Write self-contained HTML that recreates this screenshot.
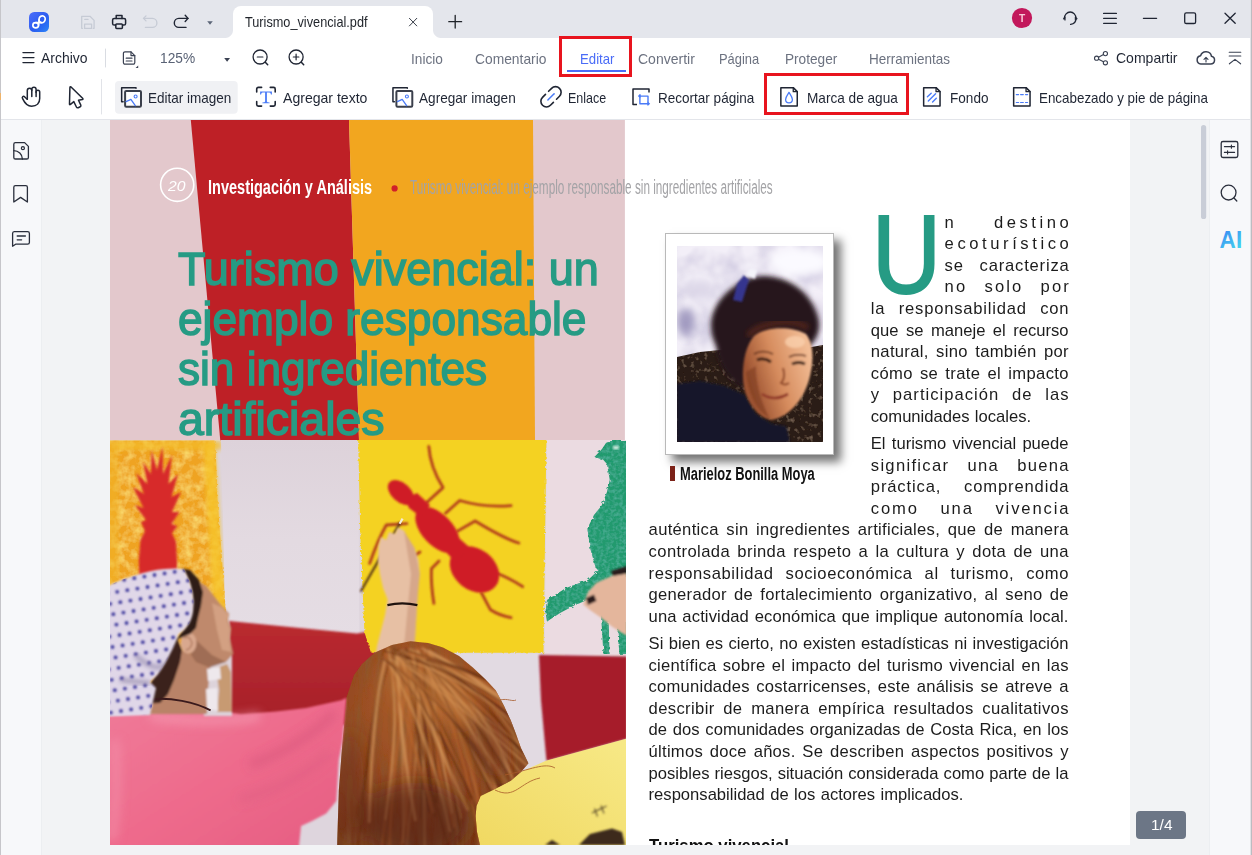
<!DOCTYPE html>
<html lang="es">
<head>
<meta charset="utf-8">
<title>Turismo_vivencial.pdf</title>
<style>
*{box-sizing:border-box;margin:0;padding:0}
html,body{width:1252px;height:855px;overflow:hidden;background:#f2f3f5;font-family:"Liberation Sans",sans-serif;}
#app{position:absolute;left:0;top:0;width:1252px;height:855px;overflow:hidden;background:#f2f3f5}
.abs{position:absolute}
.t{position:absolute;white-space:nowrap;line-height:1;transform-origin:0 0}
svg{position:absolute;overflow:visible}
/* title bar */
#titlebar{position:absolute;left:0;top:0;width:1252px;height:38px;background:#e4e6ec}
#tab{position:absolute;left:233px;top:6px;width:200px;height:32px;background:#fff;border-radius:8px 8px 0 0}
#tab:before,#tab:after{content:"";position:absolute;bottom:0;width:8px;height:8px}
#tab:before{left:-8px;background:radial-gradient(circle at 0 0,rgba(255,255,255,0) 7.5px,#fff 8.5px)}
#tab:after{right:-8px;background:radial-gradient(circle at 100% 0,rgba(255,255,255,0) 7.5px,#fff 8.5px)}
#toolbar{position:absolute;left:1px;top:38px;width:1249px;height:82px;background:#fff;border-bottom:1px solid #e3e5ea}
.ui{font-size:13.5px;color:#1f2533}
.nav{font-size:13.5px;color:#6c7280}
.redbox{position:absolute;border:3px solid #e8141e}
/* side bars */
#lside{position:absolute;left:1px;top:120px;width:41px;height:735px;background:#f7f8fa;border-right:1px solid #eceef1}
#rside{position:absolute;left:1209px;top:120px;width:41px;height:735px;background:#f7f8fa;border-left:1px solid #eceef1}
#edgeL{position:absolute;left:0;top:0;width:1px;height:855px;background:#c6c6ca}
#edgeR{position:absolute;left:1250px;top:0;width:2px;height:855px;background:linear-gradient(to right,#e2e2e6 50%,#bcbcc1 50%)}
/* page */
#page{position:absolute;left:110px;top:120px;width:1020px;height:725px;background:#fff;overflow:hidden}
.body{position:absolute;font-size:16.6px;color:#1a1a1a;white-space:nowrap;line-height:1;text-align:justify;text-align-last:justify}
</style>
</head>
<body>
<div id="app">

<!-- ============ TITLE BAR ============ -->
<div id="titlebar">
  <div id="tab"></div>
</div>

<!-- ============ TOOLBAR ============ -->
<div id="toolbar"></div>
<svg class="abs" style="left:0;top:0" width="1252" height="120" viewBox="0 0 1252 120" fill="none" stroke-linecap="round" stroke-linejoin="round" ><defs><linearGradient id="lg" x1="0" y1="0" x2="1" y2="1"><stop offset="0" stop-color="#4d6dfa"/><stop offset=".55" stop-color="#2a5cf0"/><stop offset="1" stop-color="#2b86f8"/></linearGradient></defs>
<rect x="29" y="12" width="20" height="20" rx="5.2" fill="url(#lg)"/>
<g stroke="#fff" stroke-width="1.7"><ellipse cx="42.1" cy="19.3" rx="3.05" ry="3.45" transform="rotate(18 42.1 19.3)"/><ellipse cx="35.7" cy="25.3" rx="2.85" ry="2.6"/><path d="M36,22.7 H41.4 M39.1,19.9 L38.5,25.1"/></g><g stroke="#c6cbd5" stroke-width="1.3"><path d="M82.5,28.3 H81.7 V16.3 H90 L94.1,20.4 V28.3 H93.3"/><rect x="84.6" y="24.2" width="7" height="4.2"/><path d="M84.8,19.4 H88"/></g><g stroke="#1f2533" stroke-width="1.5"><path d="M116.2,18.4 V15.6 H122 V18.4"/><path d="M115.6,25 H114.2 a1.6,1.6 0 0 1 -1.6,-1.6 V20 a1.6,1.6 0 0 1 1.6,-1.6 H124 a1.6,1.6 0 0 1 1.6,1.6 V23.4 a1.6,1.6 0 0 1 -1.6,1.6 H122.6"/><rect x="115.8" y="23.9" width="6.6" height="4.5" rx=".8"/></g><g stroke="#c6cbd5" stroke-width="1.3"><path d="M146,15.9 L143.5,18.4 L146,20.9"/><path d="M143.5,18.4 H152.4 a4.5,4.5 0 0 1 0,9 H145.4"/></g><g stroke="#1f2533" stroke-width="1.4"><path d="M185.2,15.3 L188,18.4 L185.2,21.5"/><path d="M188,18.4 H178.8 a4.5,4.5 0 0 0 0,9 H186"/></g><path d="M207.2,21.2 H212.8 L210,24.7 Z" fill="#5b6577" stroke="none"/><path d="M409.4,18.3 L416.8,25.9 M416.8,18.3 L409.4,25.9" stroke="#3a3f4a" stroke-width="1"/><path d="M448.8,21.7 H461.6 M455.2,15.3 V28.1" stroke="#1f2329" stroke-width="1.3"/><circle cx="1022" cy="18" r="10.1" fill="#c2185b" stroke="none"/><g stroke="#1f2533" stroke-width="1.3"><path d="M1064.4,18.4 a5.8,6.4 0 0 1 11.6,0 C1076,21.8 1073.6,23.8 1070.6,24.3"/></g><path d="M1063.3,18.4 L1065.2,16.8 V20 Z M1077.1,18.4 L1075.2,16.8 V20 Z" fill="#1f2533" stroke="#1f2533" stroke-width=".7"/><g stroke="#1f2533" stroke-width="1.3"><path d="M1103.6,13.4 H1116.4 M1103.6,18.3 H1116.4 M1103.6,23.3 H1116.4"/><path d="M1143.4,18.3 H1156.6"/><rect x="1184.7" y="12.9" width="10.9" height="10.6" rx="1.6"/><path d="M1225,13.2 L1235.2,23.2 M1235.2,13.2 L1225,23.2"/></g></svg><div class="t" style="left:245.4px;top:15px;font-size:14.2px;color:#1f2329;transform:scaleX(0.8962);">Turismo_vivencial.pdf</div><div class="t" style="left:1019.0px;top:13px;font-size:11.2px;font-weight:700;color:#f8c9d8;transform:scaleX(0.9062);">T</div><svg class="abs" style="left:0;top:0" width="1252" height="120" viewBox="0 0 1252 120" fill="none" stroke-linecap="round" stroke-linejoin="round" ><g stroke="#1f2533" stroke-width="1.2"><path d="M22.9,52.6 H34 M22.9,57.6 H34 M22.9,62.6 H34"/></g><path d="M105.5,49 V67" stroke="#d9dce2" stroke-width="1"/><g stroke="#3a4152" stroke-width="1.2"><path d="M125,51.8 H131 L134.8,55.6 V62.6 a1.6,1.6 0 0 1 -1.6,1.6 H125 a1.6,1.6 0 0 1 -1.6,-1.6 V53.4 a1.6,1.6 0 0 1 1.6,-1.6 Z"/><path d="M131,51.8 V55.6 H134.8"/><path d="M126.2,58.2 H132 M126.2,61 H132"/></g><path d="M138.2,65.4 V68 H135.6 Z" fill="#3a4152" stroke="none"/><path d="M224.2,57.9 H230 L227.1,61.8 Z" fill="#3a4152" stroke="none"/><g stroke="#1f2533" stroke-width="1.3"><circle cx="260.1" cy="57" r="7"/><path d="M257.3,57 H262.90000000000003" stroke-width="1.2"/><path d="M265.3,62.3 L267.70000000000005,64.8" stroke-width="1.5"/></g><g stroke="#1f2533" stroke-width="1.3"><circle cx="296.1" cy="57" r="7"/><path d="M293.3,57 H298.90000000000003 M296.1,54.2 V59.8" stroke-width="1.2"/><path d="M301.3,62.3 L303.70000000000005,64.8" stroke-width="1.5"/></g><rect x="567" y="70" width="59" height="2" fill="#4a6cf7" stroke="none"/><g stroke="#3a4152" stroke-width="1.1"><circle cx="1105.4" cy="53.6" r="2.1"/><circle cx="1096.6" cy="58.2" r="2.1"/><circle cx="1105.4" cy="62.8" r="2.1"/><path d="M1098.5,57.2 L1103.5,54.6 M1098.5,59.2 L1103.5,61.8"/></g><g stroke="#3a4152" stroke-width="1.5"><path d="M1201.8,64 H1210.6 a3.9,3.9 0 0 0 .9,-7.7 a5.6,5.6 0 0 0 -10.9,-.6 a4.2,4.2 0 0 0 .2,8.3 Z"/><path d="M1206,62 V57.6 M1204,59.4 L1206,57.4 L1208,59.4" stroke-width="1.1"/></g><g stroke="#3a4152" stroke-width="1.1"><path d="M1229.2,52.3 H1240.8 M1229.2,56 H1240.8 M1229.4,63.8 L1235,59.4 L1240.6,63.8"/></g></svg><div class="t" style="left:41.1px;top:51px;font-size:14.2px;color:#1f2533;transform:scaleX(0.9842);">Archivo</div><div class="t" style="left:159.5px;top:51px;font-size:14.2px;color:#596275;transform:scaleX(0.9665);">125%</div><div class="t" style="left:410.6px;top:52px;font-size:14.2px;color:#6c7280;transform:scaleX(0.9623);">Inicio</div><div class="t" style="left:475.2px;top:52px;font-size:14.2px;color:#6c7280;transform:scaleX(0.9741);">Comentario</div><div class="t" style="left:579.6px;top:52px;font-size:14.2px;color:#4a6cf7;transform:scaleX(0.9300);">Editar</div><div class="t" style="left:638.2px;top:52px;font-size:14.2px;color:#6c7280;transform:scaleX(0.9878);">Convertir</div><div class="t" style="left:719.4px;top:52px;font-size:14.2px;color:#6c7280;transform:scaleX(0.9092);">Página</div><div class="t" style="left:784.5px;top:52px;font-size:14.2px;color:#6c7280;transform:scaleX(0.9603);">Proteger</div><div class="t" style="left:869.4px;top:52px;font-size:14.2px;color:#6c7280;transform:scaleX(0.9516);">Herramientas</div><div class="t" style="left:1116.0px;top:51px;font-size:14.2px;color:#1f2533;transform:scaleX(0.9882);">Compartir</div><div class="redbox" style="left:559px;top:36px;width:73px;height:41px"></div><svg class="abs" style="left:0;top:0" width="1252" height="120" viewBox="0 0 1252 120" fill="none" stroke-linecap="round" stroke-linejoin="round" ><g stroke="#1f2533" stroke-width="1.5"><path d="M27.2,99.2 L24.5,96.7 a1.35,1.35 0 0 0 -1.9,1.9 C24.2,102 26.4,106.2 31.6,106.2 C37,106.2 39.7,102.8 39.7,98.6 V92 a1.8,1.8 0 0 0 -3.6,0 V96.6"/><path d="M36.1,92.4 V89.4 a2.1,2.1 0 0 0 -4.3,0 V96.6"/><path d="M31.8,90.6 a2.2,2.2 0 0 0 -4.5,0 V99.2"/></g><path d="M69.9,87.7 L69.5,103.9 Q69.5,105.2 70.5,104.4 L73.8,101.6 L76.4,107 Q77,108.2 78.2,107.7 L80.2,106.8 Q81.3,106.2 80.8,105.1 L78.5,100.3 L82.3,99.5 Q83.5,99.1 82.6,98.2 L71.3,87.2 Q70,86.2 69.9,87.7 Z" stroke="#1f2533" stroke-width="1.5"/><path d="M101.5,79.5 V114" stroke="#e1e3e8" stroke-width="1"/><rect x="115" y="81" width="122.7" height="32.7" rx="4" fill="#f0f1f4" stroke="none"/><path d="M136.0,88.3 V87.65 H121.65 V101.7 H123.10000000000001" stroke="#1f2533" stroke-width="1.5"/><rect x="125.10000000000001" y="90.9" width="15.9" height="15.9" rx="1.2" stroke="#3a3f4b" stroke-width="2" fill="#fff"/><path d="M126.10000000000001,101.6 L130.9,99.3 L135.3,105.6" stroke="#4a7bf7" stroke-width="1.3"/><circle cx="135.6" cy="96.5" r="1.5" stroke="#4a7bf7" stroke-width="1.1"/><g stroke="#1f2533" stroke-width="1.6"><path d="M256.7,92 V89 a1.6,1.6 0 0 1 1.6,-1.6 H261.6 M270.3,87.4 H273.6 a1.6,1.6 0 0 1 1.6,1.6 V92 M275.2,101.6 V104.5 a1.6,1.6 0 0 1 -1.6,1.6 H270.3 M261.6,106.1 H258.3 a1.6,1.6 0 0 1 -1.6,-1.6 V101.6"/></g><path d="M260.1,94.4 V91.4 H271.9 V94.4 H270.9 Q270.8,92.6 269.3,92.6 H266.9 V101.4 Q266.9,102.3 269.6,102.4 V103.2 H262.4 V102.4 Q265.1,102.3 265.1,101.4 V92.6 H262.7 Q261.2,92.6 261.1,94.4 Z" fill="#4a7bf7" stroke="none"/><path d="M407.3,88.3 V87.65 H392.95 V101.7 H394.4" stroke="#1f2533" stroke-width="1.5"/><rect x="396.4" y="90.9" width="15.9" height="15.9" rx="1.2" stroke="#3a3f4b" stroke-width="2" fill="#fff"/><path d="M397.4,101.6 L402.2,99.3 L406.59999999999997,105.6" stroke="#4a7bf7" stroke-width="1.3"/><circle cx="406.9" cy="96.5" r="1.5" stroke="#4a7bf7" stroke-width="1.1"/><g transform="translate(551 96.8) rotate(-45)"><path d="M2.2,-5.6 H6.4 a5.6,5.6 0 0 1 0,11.2 H2.2 M-2.2,-5.6 H-6.4 a5.6,5.6 0 0 0 0,11.2 H-2.2" stroke="#1f2533" stroke-width="1.6"/><path d="M-4.4,0 H4.4" stroke="#4a7bf7" stroke-width="1.5"/></g><path d="M649,92.6 V89 H633 V104.6 H637" stroke="#1f2533" stroke-width="1.5" stroke-linecap="butt"/><g stroke="#4a7bf7" stroke-width="1.4"><path d="M639.9,95 V103.7 H648.4 M639.4,96.1 H648 V104.6"/></g><path d="M637.8,96.1 L640.4,93.9 V98.3 Z M650.2,103.7 L647.6,101.5 V105.9 Z" fill="#4a7bf7" stroke="none"/><path d="M780.85,87.65 H793.25 L797.25,91.65 V105.95 H780.85 Z" stroke="#1f2533" stroke-width="1.5"/><path d="M793.25,87.65 V91.65 H797.25" stroke="#1f2533" stroke-width="1.3"/><path d="M789,92.4 C787.4,95 785.6,97 785.6,99.4 a3.4,3.4 0 0 0 6.8,0 C792.4,97 790.6,95 789,92.4 Z" stroke="#4a7bf7" stroke-width="1.3"/><path d="M923.65,87.65 H936.05 L940.05,91.65 V105.95 H923.65 Z" stroke="#1f2533" stroke-width="1.5"/><path d="M936.05,87.65 V91.65 H940.05" stroke="#1f2533" stroke-width="1.3"/><g stroke="#4a7bf7" stroke-width="1.4"><path d="M927.4,96.8 L931.2,93.2 M928.3,101 L935.6,93.8 M932.6,101.9 L936.3,98.3"/></g><path d="M1013.65,87.65 H1026.05 L1030.05,91.65 V105.95 H1013.65 Z" stroke="#1f2533" stroke-width="1.5"/><path d="M1026.05,87.65 V91.65 H1030.05" stroke="#1f2533" stroke-width="1.3"/><g stroke="#4a7bf7" stroke-width="1.2"><path d="M1016.3,94.6 H1018.6 M1020.6,94.6 H1023.3 M1025.5,94.6 H1027.6 M1016.3,102.5 H1018.6 M1020.6,102.5 H1023.3 M1025.5,102.5 H1027.6"/></g></svg><div class="t" style="left:148.0px;top:91px;font-size:14.2px;color:#1f2533;transform:scaleX(0.9519);">Editar imagen</div><div class="t" style="left:283.3px;top:91px;font-size:14.2px;color:#1f2533;transform:scaleX(0.9912);">Agregar texto</div><div class="t" style="left:419.3px;top:91px;font-size:14.2px;color:#1f2533;transform:scaleX(0.9581);">Agregar imagen</div><div class="t" style="left:568.4px;top:91px;font-size:14.2px;color:#1f2533;transform:scaleX(0.8821);">Enlace</div><div class="t" style="left:658.2px;top:91px;font-size:14.2px;color:#1f2533;transform:scaleX(0.9531);">Recortar página</div><div class="t" style="left:806.7px;top:91px;font-size:14.2px;color:#1f2533;transform:scaleX(0.9596);">Marca de agua</div><div class="t" style="left:949.5px;top:91px;font-size:14.2px;color:#1f2533;transform:scaleX(0.9562);">Fondo</div><div class="t" style="left:1039.4px;top:91px;font-size:14.2px;color:#1f2533;transform:scaleX(0.9435);">Encabezado y pie de página</div><div class="redbox" style="left:764px;top:73px;width:145px;height:42px"></div>

<!-- ============ SIDEBARS ============ -->
<div id="lside"></div>
<div id="rside"></div>
<svg class="abs" style="left:0;top:0" width="1252" height="855" viewBox="0 0 1252 855" fill="none" stroke-linecap="round" stroke-linejoin="round"><g stroke="#2a2f3c" stroke-width="1.3"><path d="M15.4,142.6 H24.6 L28.4,146.4 V157.4 a1.6,1.6 0 0 1 -1.6,1.6 H15.4 a1.6,1.6 0 0 1 -1.6,-1.6 V144.2 a1.6,1.6 0 0 1 1.6,-1.6 Z"/><circle cx="22.9" cy="148.2" r="1.5"/><path d="M13.8,150.6 a8.6,8.6 0 0 1 8.6,8.4"/></g><path d="M13.8,202 V187.2 a1.6,1.6 0 0 1 1.6,-1.6 H25.8 a1.6,1.6 0 0 1 1.6,1.6 V202 L20.6,197.4 Z" stroke="#2a2f3c" stroke-width="1.3"/><g stroke="#2a2f3c" stroke-width="1.3"><path d="M14.2,231.7 H27.6 a1.8,1.8 0 0 1 1.8,1.8 V242.4 a1.8,1.8 0 0 1 -1.8,1.8 H15.6 L12.6,246.2 V233.5 a1.8,1.8 0 0 1 1.6,-1.8 Z"/><path d="M17.2,236 H25.4 M17.2,239.8 H21.6"/></g><g stroke="#2a2f3c" stroke-width="1.3"><rect x="1221.2" y="141.5" width="16.6" height="16" rx="1.8"/><path d="M1224.4,146.6 H1234.6 M1224.4,152.4 H1234.6" stroke-width="1.1"/><path d="M1231.4,145 V148.2 M1227.6,150.8 V154" stroke-width="1.1"/></g><g stroke="#2a2f3c" stroke-width="1.3"><circle cx="1228.6" cy="192.6" r="7.4"/><path d="M1234,198 L1236.8,201"/></g><rect x="1201" y="125" width="5.2" height="94" rx="2.6" fill="#c9cdd7" stroke="none"/><defs><linearGradient id="aig" x1="0" y1="0" x2="0.6" y2="1"><stop offset="0" stop-color="#3b7df5"/><stop offset="1" stop-color="#43d3ee"/></linearGradient></defs><text x="1219.6" y="247.6" font-family="Liberation Sans, sans-serif" font-weight="700" font-size="23.5" fill="url(#aig)" stroke="none" textLength="22.6" lengthAdjust="spacingAndGlyphs">AI</text></svg><div class="abs" style="left:1136px;top:811px;width:50px;height:28px;background:#6c7686;border-radius:4px"></div><div class="t" style="left:1151.0px;top:818px;font-size:14.2px;color:#fff;transform:scaleX(1.0892);">1/4</div>

<!-- ============ PAGE ============ -->
<div id="page">
<div class="abs" style="left:-110px;top:-120px;width:1252px;height:855px"><svg class="abs" style="left:0;top:0" width="1252" height="855" viewBox="0 0 1252 855"><rect x="110" y="120" width="514.9" height="320.5" fill="#e3c8cc"/><polygon points="190.8,120 349,120 359,440.5 220.3,440.5" fill="#be2026"/><polygon points="349,120 533,120 535,440.5 359,440.5" fill="#f2a61f"/><circle cx="177.2" cy="184.8" r="16.6" fill="none" stroke="#fff" stroke-width="1.6"/><circle cx="394.6" cy="188.4" r="3.1" fill="#d0202a"/></svg><div class="t" style="left:167.6px;top:179px;font-size:14.5px;color:#fff;transform:scaleX(1.0850);font-style:italic;">20</div><div class="t" style="left:208.3px;top:178px;font-size:19.5px;font-weight:700;color:#fff;transform:scaleX(0.7447);">Investigación y Análisis</div><div class="t" style="left:410.0px;top:178px;font-size:19.5px;color:#a3a3a6;transform:scaleX(0.6026);">Turismo vivencial: un ejemplo responsable sin ingredientes artificiales</div><div class="t" style="left:177.8px;top:246px;font-size:46px;color:#269b84;transform:scaleX(0.9776);-webkit-text-stroke:1.5px #269b84;">Turismo vivencial: un</div><div class="t" style="left:177.8px;top:296px;font-size:46px;color:#269b84;transform:scaleX(0.9623);-webkit-text-stroke:1.5px #269b84;">ejemplo responsable</div><div class="t" style="left:177.8px;top:346px;font-size:46px;color:#269b84;transform:scaleX(0.9590);-webkit-text-stroke:1.5px #269b84;">sin ingredientes</div><div class="t" style="left:177.8px;top:396px;font-size:46px;color:#269b84;transform:scaleX(1.0102);-webkit-text-stroke:1.5px #269b84;">artificiales</div><svg class="abs" style="left:0;top:0" width="1252" height="855" viewBox="0 0 1252 855"><defs>
<clipPath id="pc"><rect x="110" y="440.5" width="515.8" height="404.5"/></clipPath>
<clipPath id="scarfc"><path d="M108,586 C122,579 146,570.5 165,569 C172,568.2 179,568 184,569.5 C190,580 194.5,595 193.4,606 C193,620 188,628 178.7,634 C175,645 171,652 168,658 C164,666 160,671 157.6,674.7 L150,682 L156,688 L150,715 L117.6,716 L108,716 Z"/></clipPath>
<filter id="b1" x="-5%" y="-5%" width="110%" height="110%"><feGaussianBlur stdDeviation="0.8"/></filter>
<filter id="b2" x="-10%" y="-10%" width="120%" height="120%"><feGaussianBlur stdDeviation="2"/></filter>
<filter id="b9" x="-30%" y="-30%" width="160%" height="160%"><feGaussianBlur stdDeviation="10"/></filter>
<filter id="b4" x="-20%" y="-20%" width="140%" height="140%"><feGaussianBlur stdDeviation="5"/></filter>
<filter id="rough" x="-5%" y="-5%" width="110%" height="110%"><feTurbulence type="fractalNoise" baseFrequency="0.35" numOctaves="2" seed="3" result="n"/><feDisplacementMap in="SourceGraphic" in2="n" scale="3.5"/><feGaussianBlur stdDeviation="0.5"/></filter>
<filter id="birdf" x="-5%" y="-5%" width="110%" height="110%"><feTurbulence type="fractalNoise" baseFrequency="0.3" numOctaves="2" seed="3" result="n"/><feDisplacementMap in="SourceGraphic" in2="n" scale="3.5" result="disp"/><feColorMatrix in="n" type="matrix" values="0 0 0 0 0.07  0 0 0 0 0.42  0 0 0 0 0.3  0 2.2 0 0 -0.85" result="d"/><feComposite in="d" in2="disp" operator="in" result="dd"/><feMerge><feMergeNode in="disp"/><feMergeNode in="dd"/></feMerge><feGaussianBlur stdDeviation="0.5"/></filter>
<filter id="hairf" x="-5%" y="-5%" width="110%" height="110%"><feTurbulence type="fractalNoise" baseFrequency="0.11 0.018" numOctaves="3" seed="11" result="n"/><feColorMatrix in="n" type="matrix" values="0 0 0 0 0.25  0 0 0 0 0.1  0 0 0 0 0.03  1.6 0 0 0 -0.55" result="d"/><feComposite in="d" in2="SourceGraphic" operator="in" result="dd"/><feMerge><feMergeNode in="SourceGraphic"/><feMergeNode in="dd"/></feMerge></filter>
<filter id="grain" x="0" y="0" width="100%" height="100%"><feTurbulence type="fractalNoise" baseFrequency="0.12" numOctaves="3" seed="5" result="n"/><feColorMatrix in="n" type="matrix" values="0 0 0 0 0.96  0 0 0 0 0.73  0 0 0 0 0.17  0 1.7 0 0 -0.62" result="d"/><feComposite in="d" in2="SourceGraphic" operator="in" result="dd"/><feMerge><feMergeNode in="SourceGraphic"/><feMergeNode in="dd"/></feMerge></filter>
<linearGradient id="wallg" x1="0" y1="0" x2="0" y2="1"><stop offset="0" stop-color="#ddd2da"/><stop offset=".5" stop-color="#e3dae1"/><stop offset="1" stop-color="#e5dde4"/></linearGradient>
<linearGradient id="redg" x1="0" y1="0" x2="0" y2="1"><stop offset="0" stop-color="#ba2a30"/><stop offset="1" stop-color="#a6212b"/></linearGradient>
<linearGradient id="pinkg" x1="0" y1="0" x2="1" y2="1"><stop offset="0" stop-color="#f07b99"/><stop offset=".5" stop-color="#ee6b8c"/><stop offset="1" stop-color="#e55d82"/></linearGradient>
<linearGradient id="yshirt" x1="0" y1="1" x2="1" y2="0"><stop offset="0" stop-color="#f0d860"/><stop offset="1" stop-color="#f7e987"/></linearGradient>
<radialGradient id="hairg" cx="0.45" cy="0.3" r="0.8"><stop offset="0" stop-color="#ae602c"/><stop offset=".55" stop-color="#934821"/><stop offset="1" stop-color="#723215"/></radialGradient>
</defs><g clip-path="url(#pc)"><rect x="110" y="440" width="516" height="405" fill="#ded5dd"/><g filter="url(#grain)"><g filter="url(#rough)"><polygon points="100.0,430.0 215.0,430.0 217.5,500.0 222.0,560.0 226.5,622.0 227.0,705.0 100.0,705.0" fill="#efa323"/></g></g><g filter="url(#b2)"><polygon points="203.0,441.0 215.0,441.0 226.0,622.0 214.0,622.0" fill="#f6c62c" opacity=".8"/><rect x="110" y="441" width="112" height="9" fill="#f4bd2a" opacity=".7"/><rect x="108" y="441" width="10" height="150" fill="#f2b528" opacity=".6"/></g><g filter="url(#b1)"><polygon points="140.0,600.0 138.8,560.0 140.5,540.0 145.0,531.0 141.0,522.0 146.0,520.0 135.0,505.0 143.5,508.0 133.0,487.0 144.0,494.0 136.0,473.0 147.5,484.0 143.0,462.0 151.0,474.0 151.5,450.0 157.0,470.0 162.5,446.0 163.0,474.0 172.0,455.0 168.5,484.0 178.0,474.0 171.5,497.0 181.0,492.0 172.0,512.0 179.5,512.0 171.5,524.0 177.5,526.0 172.0,533.0 176.0,542.0 177.0,562.0 176.0,600.0" fill="#d72a2c"/></g><polygon points="221.0,440.0 358.0,440.0 359.5,640.0 229.0,640.0 225.0,600.0" fill="url(#wallg)"/><g filter="url(#b1)"><polygon points="229.2,621.0 305.0,628.4 357.0,633.4 365.0,632.0 372.0,640.0 380.0,670.0 372.0,725.0 229.0,725.0" fill="url(#redg)"/></g><g filter="url(#rough)"><polygon points="358.0,435.0 546.5,435.0 545.0,540.0 543.5,652.8 371.0,652.8 364.4,632.0 360.5,540.0" fill="#f4d222"/></g><polygon points="547.0,440.0 626.0,440.0 626.0,656.0 544.5,656.0" fill="#ebdbe1"/><g filter="url(#birdf)"><polygon points="594.4,457.0 602.0,449.0 606.0,443.0 612.6,440.0 627.0,440.0 627.0,577.0 612.0,577.0 601.4,572.0 595.8,568.0 590.2,548.3 587.4,528.6 594.0,515.0 601.4,506.0 607.0,492.0 609.8,480.0 607.0,464.0 603.0,459.5" fill="#219a6e"/><polygon points="603.0,566.0 588.0,580.0 566.0,588.0 547.0,600.0 545.5,612.0 547.0,621.5 560.0,613.0 575.0,605.0 590.0,599.0 605.0,597.0 616.0,582.0" fill="#219a6e"/><polygon points="600,598 608,598 609.5,654 603.5,654" fill="#219a6e"/><polygon points="617,622 627,622 627,655 619.5,655" fill="#219a6e"/></g><ellipse cx="616" cy="447.6" rx="3.4" ry="1.8" fill="#d8efe4" filter="url(#b1)"/><g filter="url(#b1)"><polygon points="583.2,604.4 588.0,592.0 596.0,583.0 612.6,575.5 627.0,573.5 627.0,636.0 612.6,627.0 600.0,617.0 590.0,610.0" fill="#e4b69c"/><polygon points="586.0,598.0 594.0,594.5 596.5,601.0 588.0,605.0" fill="#2c1c1a"/><polygon points="611.0,571.0 627.0,566.0 627.0,573.5 613.0,576.0" fill="#2c1c1a"/></g><polygon points="430.0,653.5 541.0,653.5 548.0,770.0 430.0,790.0" fill="#e2dae2"/><g filter="url(#b1)"><polygon points="539.0,655.0 627.0,656.5 627.0,739.0 546.5,761.0 541.0,700.0" fill="#a61b2b"/></g><g fill="none" stroke="#b23c1c" stroke-width="2.8" stroke-linecap="round" stroke-linejoin="round" filter="url(#b1)"><path d="M428.8,446.4 C430,465 437,478 443,487.6 L426.2,503"/><path d="M445.5,513.3 L459.7,500.5 C478,506 495,507 511.1,505.6"/><path d="M457.1,531.4 L475.1,521 C490,530 505,539 518.9,543"/><path d="M494.4,572.5 C505,576 514,581 522.7,586.7"/><path d="M481.5,593 L490.5,609.8 C497,614 504,616.5 511.1,617.6"/><path d="M439,561 L431.4,568.7 C431,580 432,592 433.9,603.4"/><path d="M406.9,523.6 L386.3,525 C379,538 374,551 369.6,563.5"/><path d="M420,552 L398,566"/></g><g filter="url(#b1)" fill="#cf1f27"><ellipse cx="401" cy="492.5" rx="15.5" ry="9.5" transform="rotate(42 401 492.5)"/><ellipse cx="437.5" cy="530" rx="28" ry="15.5" transform="rotate(47 437.5 530)"/><ellipse cx="474.5" cy="569.5" rx="27" ry="20.5" transform="rotate(38 474.5 569.5)"/><polygon points="405,499 417,493 430,505 421,517 409,508"/><polygon points="445,551 459,538 469,547 456,563"/></g><path d="M400.5,522.3 L360.6,591.8" stroke="#4a2616" stroke-width="2" filter="url(#b1)"/><path d="M402.6,518.6 L399.6,523.8" stroke="#f4ead8" stroke-width="2.2"/><g filter="url(#b1)"><polygon points="378.6,545.5 381.0,537.0 386.0,540.0 389.0,532.0 395.0,534.0 398.0,527.5 404.0,530.5 408.0,538.0 414.6,548.0 418.5,560.0 419.8,573.8 418.0,590.0 417.2,604.0 414.6,646.0 412.0,665.0 374.0,665.0 377.0,646.0 385.0,615.0 387.6,599.5 383.0,588.0 379.9,573.8 378.0,560.0" fill="#e7c0a4"/><polygon points="404.0,531.0 414.6,548.0 419.8,573.8 417.2,604.0 414.6,646.0 404.0,646.0 408.0,604.0 411.0,574.0 407.0,550.0" fill="#cf9d80" opacity=".7"/></g><path d="M387.4,605.2 Q402,601.6 417.4,605.2" stroke="#1e120e" stroke-width="2.3" fill="none"/><polygon points="470.0,850.0 474.0,800.0 500.0,781.0 546.0,760.7 627.0,738.5 627.0,850.0" fill="url(#yshirt)"/><g filter="url(#b1)"><polygon points="579.0,845.0 590.0,834.0 612.0,828.5 622.0,832.0 625.0,845.0" fill="#3c2b1c"/><path d="M592,813 l8,-4 M594.5,808.5 l3,8 M598.5,810 l8,-4 M601,805.5 l3,8" stroke="#5a4a2a" stroke-width="1.1"/><polygon points="545.0,845.0 552.0,840.0 560.0,845.0" fill="#3c2b1c"/></g><clipPath id="hc"><polygon points="337.0,850.0 338.8,790.8 342.6,740.6 346.4,697.8 353.9,675.2 362.0,664.0 375.0,652.6 392.0,645.0 410.3,641.3 428.0,643.0 443.0,647.5 459.0,656.0 473.1,667.7 485.0,679.0 495.7,690.3 504.0,706.0 510.8,720.4 516.0,734.0 520.9,748.0 528.4,763.2 521.0,772.0 510.8,780.8 495.0,789.0 480.7,795.9 476.5,806.0 475.6,816.0 477.0,832.0 481.0,850.0"/></clipPath><g filter="url(#hairf)"><polygon points="337.0,850.0 338.8,790.8 342.6,740.6 346.4,697.8 353.9,675.2 362.0,664.0 375.0,652.6 392.0,645.0 410.3,641.3 428.0,643.0 443.0,647.5 459.0,656.0 473.1,667.7 485.0,679.0 495.7,690.3 504.0,706.0 510.8,720.4 516.0,734.0 520.9,748.0 528.4,763.2 521.0,772.0 510.8,780.8 495.0,789.0 480.7,795.9 476.5,806.0 475.6,816.0 477.0,832.0 481.0,850.0" fill="url(#hairg)"/></g><g clip-path="url(#hc)"><g filter="url(#b1)" fill="none" stroke-linecap="round"><path d="M414.7,654.7 Q395.5,728.0 388.7,847.8" stroke="#b8652e" stroke-width="2.3" opacity="0.60"/><path d="M383.2,653.2 Q377.4,728.3 357.4,816.5" stroke="#5a260e" stroke-width="1.7" opacity="0.37"/><path d="M419.9,660.3 Q419.3,761.5 402.4,874.4" stroke="#d79a5e" stroke-width="1.5" opacity="0.52"/><path d="M390.7,659.4 Q366.4,718.8 361.0,830.8" stroke="#5a260e" stroke-width="2.0" opacity="0.47"/><path d="M384.9,660.1 Q371.5,717.9 369.2,821.5" stroke="#d79a5e" stroke-width="3.2" opacity="0.69"/><path d="M412.0,658.2 Q391.5,741.4 390.1,856.6" stroke="#b8652e" stroke-width="1.6" opacity="0.60"/><path d="M403.5,653.1 Q394.2,742.4 380.4,859.5" stroke="#b8652e" stroke-width="2.1" opacity="0.60"/><path d="M418.9,661.9 Q423.9,723.6 421.3,817.9" stroke="#5a260e" stroke-width="1.7" opacity="0.52"/><path d="M414.1,650.5 Q402.9,730.5 407.5,836.6" stroke="#b8652e" stroke-width="2.0" opacity="0.60"/><path d="M388.2,648.9 Q402.1,711.0 385.5,818.8" stroke="#d79a5e" stroke-width="2.7" opacity="0.59"/><path d="M403.4,661.8 Q420.5,749.4 396.4,874.0" stroke="#b8652e" stroke-width="2.3" opacity="0.60"/><path d="M426.8,650.3 Q419.4,709.7 435.0,816.1" stroke="#5a260e" stroke-width="3.0" opacity="0.44"/><path d="M397.5,653.9 Q398.5,730.2 415.3,819.7" stroke="#d79a5e" stroke-width="3.4" opacity="0.66"/><path d="M395.6,661.4 Q404.4,730.2 403.3,842.4" stroke="#d79a5e" stroke-width="3.0" opacity="0.42"/><path d="M413.1,654.0 Q425.8,732.9 424.6,860.9" stroke="#d79a5e" stroke-width="1.8" opacity="0.54"/><path d="M417.3,661.4 Q410.0,717.8 429.0,811.6" stroke="#5a260e" stroke-width="2.5" opacity="0.56"/><path d="M430.9,660.7 Q435.6,740.6 458.7,834.8" stroke="#d79a5e" stroke-width="2.2" opacity="0.36"/><path d="M415.8,649.8 Q440.8,738.6 455.0,852.4" stroke="#5a260e" stroke-width="1.6" opacity="0.37"/><path d="M418.5,655.7 Q423.9,719.8 454.0,826.6" stroke="#b8652e" stroke-width="2.9" opacity="0.60"/><path d="M406.2,648.9 Q431.0,714.3 428.8,797.7" stroke="#5a260e" stroke-width="2.7" opacity="0.38"/><path d="M402.4,652.3 Q438.1,714.9 436.9,801.1" stroke="#5a260e" stroke-width="3.3" opacity="0.46"/><path d="M408.4,658.3 Q454.6,737.2 459.2,840.4" stroke="#5a260e" stroke-width="2.4" opacity="0.46"/><path d="M431.8,653.0 Q458.8,722.2 490.9,847.1" stroke="#d79a5e" stroke-width="1.4" opacity="0.38"/><path d="M405.4,656.7 Q414.3,734.1 449.7,851.1" stroke="#5a260e" stroke-width="2.1" opacity="0.46"/><path d="M385.4,654.1 Q404.1,711.7 432.9,811.7" stroke="#b8652e" stroke-width="2.8" opacity="0.60"/><path d="M402.3,654.8 Q435.8,706.5 451.9,812.6" stroke="#d79a5e" stroke-width="2.3" opacity="0.52"/><path d="M422.0,656.8 Q465.3,735.9 481.9,855.8" stroke="#b8652e" stroke-width="2.7" opacity="0.60"/><path d="M428.8,653.4 Q462.7,708.3 480.4,811.1" stroke="#b8652e" stroke-width="3.4" opacity="0.60"/><path d="M398.6,653.5 Q424.2,713.7 467.4,809.3" stroke="#d79a5e" stroke-width="3.3" opacity="0.46"/><path d="M388.4,661.4 Q430.3,736.3 449.6,830.7" stroke="#d79a5e" stroke-width="2.7" opacity="0.57"/><path d="M399.1,651.6 Q459.0,739.6 486.1,844.7" stroke="#5a260e" stroke-width="2.5" opacity="0.36"/><path d="M430.0,654.5 Q469.0,714.3 504.5,812.5" stroke="#d79a5e" stroke-width="2.0" opacity="0.41"/><path d="M431.0,648.5 Q482.2,694.7 503.0,793.9" stroke="#5a260e" stroke-width="2.3" opacity="0.31"/><path d="M418.0,651.4 Q450.3,716.7 510.0,817.1" stroke="#d79a5e" stroke-width="2.2" opacity="0.46"/><path d="M389.7,659.1 Q441.1,721.3 461.2,817.8" stroke="#d79a5e" stroke-width="2.1" opacity="0.42"/><path d="M423.1,659.8 Q480.7,707.4 499.6,805.6" stroke="#d79a5e" stroke-width="1.4" opacity="0.55"/><path d="M421.0,650.6 Q453.2,715.8 509.2,828.5" stroke="#5a260e" stroke-width="2.2" opacity="0.49"/><path d="M396.5,652.9 Q433.8,709.3 477.6,804.6" stroke="#b8652e" stroke-width="1.4" opacity="0.60"/><path d="M416.9,650.7 Q464.2,720.0 520.1,802.1" stroke="#d79a5e" stroke-width="2.7" opacity="0.52"/><path d="M388.2,661.0 Q435.3,715.1 471.6,797.9" stroke="#5a260e" stroke-width="2.4" opacity="0.52"/><path d="M393.7,648.6 Q452.8,713.3 514.5,812.6" stroke="#5a260e" stroke-width="2.8" opacity="0.35"/><path d="M425.5,659.3 Q489.8,704.7 516.7,791.4" stroke="#d79a5e" stroke-width="3.2" opacity="0.62"/><path d="M431.5,653.5 Q512.0,712.1 552.7,823.8" stroke="#5a260e" stroke-width="2.0" opacity="0.30"/><path d="M420.8,657.1 Q468.2,707.3 532.0,810.4" stroke="#5a260e" stroke-width="1.7" opacity="0.56"/><path d="M421.8,658.4 Q492.1,721.8 526.9,811.9" stroke="#d79a5e" stroke-width="1.6" opacity="0.49"/><path d="M401.1,649.8 Q451.5,714.4 527.9,808.4" stroke="#5a260e" stroke-width="2.7" opacity="0.31"/><path d="M429.4,655.3 Q500.1,696.8 534.4,772.0" stroke="#d79a5e" stroke-width="2.1" opacity="0.43"/><path d="M420.6,657.1 Q480.1,718.7 549.5,810.1" stroke="#d79a5e" stroke-width="1.8" opacity="0.52"/><path d="M384.8,659.5 Q452.0,703.0 504.9,793.3" stroke="#5a260e" stroke-width="3.4" opacity="0.52"/><path d="M383.2,657.3 Q451.2,702.1 505.4,783.4" stroke="#b8652e" stroke-width="1.6" opacity="0.60"/><path d="M423.6,654.8 Q483.0,709.6 566.4,791.6" stroke="#b8652e" stroke-width="2.3" opacity="0.60"/><path d="M414.4,656.4 Q488.1,692.7 539.9,778.8" stroke="#5a260e" stroke-width="1.8" opacity="0.41"/><path d="M429.4,650.8 Q516.7,697.1 570.9,794.3" stroke="#d79a5e" stroke-width="2.6" opacity="0.46"/><path d="M396.2,657.6 Q471.1,713.1 552.6,788.6" stroke="#d79a5e" stroke-width="2.8" opacity="0.52"/><path d="M399.8,657.1 Q474.2,709.4 550.2,780.5" stroke="#d79a5e" stroke-width="2.7" opacity="0.37"/><path d="M427.0,657.2 Q474.6,685.9 548.7,757.9" stroke="#5a260e" stroke-width="2.3" opacity="0.43"/><path d="M414.8,656.9 Q478.4,702.6 543.7,774.2" stroke="#5a260e" stroke-width="2.2" opacity="0.49"/><path d="M422.5,648.3 Q496.3,683.6 551.9,749.9" stroke="#d79a5e" stroke-width="2.5" opacity="0.56"/><path d="M391.3,659.2 Q464.3,697.6 541.8,761.2" stroke="#d79a5e" stroke-width="1.6" opacity="0.37"/><path d="M425.4,651.1 Q494.9,686.4 584.3,756.2" stroke="#d79a5e" stroke-width="2.9" opacity="0.49"/><path d="M409.9,649.2 Q486.9,683.3 574.4,754.9" stroke="#d79a5e" stroke-width="2.5" opacity="0.42"/><path d="M416.2,648.1 Q487.5,689.7 565.1,755.9" stroke="#b8652e" stroke-width="2.0" opacity="0.60"/><path d="M407.9,660.5 Q484.4,685.3 533.3,746.9" stroke="#d79a5e" stroke-width="1.4" opacity="0.67"/><path d="M419.0,655.4 Q493.3,699.7 583.8,769.6" stroke="#5a260e" stroke-width="2.1" opacity="0.50"/><path d="M397.4,649.3 Q459.8,667.3 526.8,731.7" stroke="#5a260e" stroke-width="1.9" opacity="0.34"/><path d="M405.1,651.2 Q490.8,669.7 577.6,737.9" stroke="#5a260e" stroke-width="2.6" opacity="0.51"/><path d="M401.2,650.8 Q487.1,682.6 565.4,738.4" stroke="#d79a5e" stroke-width="3.2" opacity="0.42"/><path d="M384.6,651.0 Q474.7,674.8 530.3,724.1" stroke="#5a260e" stroke-width="2.6" opacity="0.37"/><path d="M409.4,653.3 Q494.6,677.6 587.6,739.2" stroke="#b8652e" stroke-width="2.7" opacity="0.60"/><path d="M427.6,659.8 Q496.6,675.2 583.0,731.9" stroke="#5a260e" stroke-width="3.3" opacity="0.50"/></g><g filter="url(#b9)"><ellipse cx="415" cy="820" rx="55" ry="38" fill="#4e200c" opacity=".6"/><ellipse cx="350" cy="790" rx="14" ry="60" fill="#6a2e12" opacity=".5"/><ellipse cx="430" cy="690" rx="50" ry="26" fill="#c8803e" opacity=".4" transform="rotate(25 430 690)"/><ellipse cx="490" cy="745" rx="20" ry="34" fill="#6a2e12" opacity=".4" transform="rotate(-20 490 745)"/></g></g><g fill="none" stroke="#a85a2a" stroke-width="1" opacity=".8"><path d="M505,775 C530,770 545,762 555,768"/><path d="M495,790 C515,800 520,782 540,778"/><path d="M500,700 C508,698 512,702 516,700"/></g><g filter="url(#b1)"><polygon points="105.0,716.0 150.3,712.9 180.0,706.0 208.0,707.9 225.0,712.0 240.8,714.2 276.0,711.6 306.1,707.9 341.3,700.3 346.4,697.8 342.6,740.6 338.8,760.0 336.3,800.9 326.2,813.5 312.0,821.0 301.1,826.0 298.6,850.0 105.0,850.0" fill="url(#pinkg)"/></g><g filter="url(#b4)"><path d="M150,716 C190,722 230,722 260,716" stroke="#f8a0b6" stroke-width="9" fill="none" opacity=".55"/><path d="M250,765 C290,750 318,730 335,712" stroke="#d4527a" stroke-width="9" fill="none" opacity=".5"/><path d="M240,800 C275,790 305,775 330,752" stroke="#d95a80" stroke-width="8" fill="none" opacity=".4"/><path d="M115,740 C118,780 116,810 112,840" stroke="#f595ad" stroke-width="10" fill="none" opacity=".5"/></g><g filter="url(#b1)"><polygon points="204,655 232,655 232,716 204,716" fill="#ddd3da"/><polygon points="168.0,658.0 178.7,649.5 195.0,655.0 210.3,666.3 208.0,690.0 207.0,714.0 190.0,714.0 146.0,714.0 150.0,700.0 160.0,690.0" fill="#b98367"/><polygon points="197.6,581.0 206.0,586.0 214.5,596.8 221.0,605.0 229.2,613.7 228.0,620.0 231.3,628.4 230.0,638.0 233.4,653.7 226.0,662.0 210.3,666.3 196.0,660.0 187.0,648.0 186.0,632.0 193.0,620.0 196.5,600.0" fill="#bf896c"/><polygon points="212.0,603.0 221.0,607.0 228.5,614.5 227.0,621.0 230.0,629.0 229.0,640.0 231.5,652.0 222.0,650.0 217.0,630.0" fill="#d6a486" opacity=".85"/><polygon points="196.0,640.0 212.0,655.0 226.0,662.0 210.3,667.5 196.0,662.0 188.0,650.0" fill="#8a5a44" opacity=".6"/><ellipse cx="188.5" cy="643" rx="8" ry="10.5" fill="#d9a88e"/><path d="M184,638 q6,-3 8,5 q-1,6 -6,7" stroke="#a87258" stroke-width="1.3" fill="none"/><polygon points="216.0,668.0 227.0,664.0 231.0,672.0 232.0,712.0 217.0,712.0 219.0,690.0" fill="#c79a72"/><polygon points="207.0,669.0 220.0,667.0 221.0,679.0 208.0,681.0" fill="#eee8ec"/><polygon points="206.0,689.0 217.0,688.0 218.0,711.0 207.0,709.0" fill="#eee8ec"/><polygon points="182.0,568.6 190.0,570.0 199.0,580.0 203.0,592.0 201.0,606.0 198.0,618.0 196.0,628.0 190.0,634.0 176.0,640.0 186.0,626.0 191.3,612.0 192.0,596.0 189.0,582.0" fill="#2e1c18"/><polygon points="176.0,636.0 182.0,650.0 180.0,662.0 174.0,680.0 168.0,694.0 160.0,703.0 140.0,704.0 146.0,690.0 155.0,676.0 164.0,660.0 170.0,646.0" fill="#3a221c"/></g><path d="M150.3,699.4 C170,697 195,702 210.6,710.4" stroke="#3a1a1c" stroke-width="1.8" fill="none"/><g filter="url(#b1)"><path d="M108,586 C122,579 146,570.5 165,569 C172,568.2 179,568 184,569.5 C190,580 194.5,595 193.4,606 C193,620 188,628 178.7,634 C175,645 171,652 168,658 C164,666 160,671 157.6,674.7 L150,682 L156,688 L150,715 L117.6,716 L108,716 Z" fill="#e0d7e8"/></g><g clip-path="url(#scarfc)"><g fill="#3f3a9c" filter="url(#b1)"><circle cx="64.4" cy="556.6" r="1.9"/><circle cx="74.5" cy="555.0" r="1.9"/><circle cx="84.6" cy="553.4" r="1.9"/><circle cx="94.7" cy="551.8" r="1.9"/><circle cx="104.8" cy="550.2" r="1.9"/><circle cx="114.9" cy="548.6" r="1.9"/><circle cx="125.0" cy="547.0" r="1.9"/><circle cx="135.1" cy="545.4" r="1.9"/><circle cx="145.2" cy="543.8" r="1.9"/><circle cx="155.3" cy="542.2" r="1.9"/><circle cx="165.4" cy="540.6" r="1.9"/><circle cx="175.5" cy="539.0" r="1.9"/><circle cx="185.6" cy="537.4" r="1.9"/><circle cx="195.7" cy="535.8" r="1.9"/><circle cx="205.8" cy="534.2" r="1.9"/><circle cx="215.9" cy="532.6" r="1.9"/><circle cx="67.5" cy="567.0" r="1.9"/><circle cx="77.6" cy="565.4" r="1.9"/><circle cx="87.7" cy="563.8" r="1.9"/><circle cx="97.8" cy="562.2" r="1.9"/><circle cx="107.9" cy="560.6" r="1.9"/><circle cx="118.0" cy="559.0" r="1.9"/><circle cx="128.1" cy="557.4" r="1.9"/><circle cx="138.2" cy="555.8" r="1.9"/><circle cx="148.3" cy="554.2" r="1.9"/><circle cx="158.4" cy="552.6" r="1.9"/><circle cx="168.5" cy="551.0" r="1.9"/><circle cx="178.6" cy="549.4" r="1.9"/><circle cx="188.7" cy="547.8" r="1.9"/><circle cx="198.8" cy="546.2" r="1.9"/><circle cx="208.9" cy="544.6" r="1.9"/><circle cx="219.0" cy="543.0" r="1.9"/><circle cx="70.6" cy="577.4" r="1.9"/><circle cx="80.7" cy="575.8" r="1.9"/><circle cx="90.8" cy="574.2" r="1.9"/><circle cx="100.9" cy="572.6" r="1.9"/><circle cx="111.0" cy="571.0" r="1.9"/><circle cx="121.1" cy="569.4" r="1.9"/><circle cx="131.2" cy="567.8" r="1.9"/><circle cx="141.3" cy="566.2" r="1.9"/><circle cx="151.4" cy="564.6" r="1.9"/><circle cx="161.5" cy="563.0" r="1.9"/><circle cx="171.6" cy="561.4" r="1.9"/><circle cx="181.7" cy="559.8" r="1.9"/><circle cx="191.8" cy="558.2" r="1.9"/><circle cx="201.9" cy="556.6" r="1.9"/><circle cx="212.0" cy="555.0" r="1.9"/><circle cx="222.1" cy="553.4" r="1.9"/><circle cx="73.7" cy="587.8" r="1.9"/><circle cx="83.8" cy="586.2" r="1.9"/><circle cx="93.9" cy="584.6" r="1.9"/><circle cx="104.0" cy="583.0" r="1.9"/><circle cx="114.1" cy="581.4" r="1.9"/><circle cx="124.2" cy="579.8" r="1.9"/><circle cx="134.3" cy="578.2" r="1.9"/><circle cx="144.4" cy="576.6" r="1.9"/><circle cx="154.5" cy="575.0" r="1.9"/><circle cx="164.6" cy="573.4" r="1.9"/><circle cx="174.7" cy="571.8" r="1.9"/><circle cx="184.8" cy="570.2" r="1.9"/><circle cx="194.9" cy="568.6" r="1.9"/><circle cx="205.0" cy="567.0" r="1.9"/><circle cx="215.1" cy="565.4" r="1.9"/><circle cx="225.2" cy="563.8" r="1.9"/><circle cx="76.8" cy="598.2" r="1.9"/><circle cx="86.9" cy="596.6" r="1.9"/><circle cx="97.0" cy="595.0" r="1.9"/><circle cx="107.1" cy="593.4" r="1.9"/><circle cx="117.2" cy="591.8" r="1.9"/><circle cx="127.3" cy="590.2" r="1.9"/><circle cx="137.4" cy="588.6" r="1.9"/><circle cx="147.5" cy="587.0" r="1.9"/><circle cx="157.6" cy="585.4" r="1.9"/><circle cx="167.7" cy="583.8" r="1.9"/><circle cx="177.8" cy="582.2" r="1.9"/><circle cx="187.9" cy="580.6" r="1.9"/><circle cx="198.0" cy="579.0" r="1.9"/><circle cx="208.1" cy="577.4" r="1.9"/><circle cx="218.2" cy="575.8" r="1.9"/><circle cx="228.3" cy="574.2" r="1.9"/><circle cx="79.9" cy="608.6" r="1.9"/><circle cx="90.0" cy="607.0" r="1.9"/><circle cx="100.1" cy="605.4" r="1.9"/><circle cx="110.2" cy="603.8" r="1.9"/><circle cx="120.3" cy="602.2" r="1.9"/><circle cx="130.4" cy="600.6" r="1.9"/><circle cx="140.5" cy="599.0" r="1.9"/><circle cx="150.6" cy="597.4" r="1.9"/><circle cx="160.7" cy="595.8" r="1.9"/><circle cx="170.8" cy="594.2" r="1.9"/><circle cx="180.9" cy="592.6" r="1.9"/><circle cx="191.0" cy="591.0" r="1.9"/><circle cx="201.1" cy="589.4" r="1.9"/><circle cx="211.2" cy="587.8" r="1.9"/><circle cx="221.3" cy="586.2" r="1.9"/><circle cx="231.4" cy="584.6" r="1.9"/><circle cx="83.0" cy="619.0" r="1.9"/><circle cx="93.1" cy="617.4" r="1.9"/><circle cx="103.2" cy="615.8" r="1.9"/><circle cx="113.3" cy="614.2" r="1.9"/><circle cx="123.4" cy="612.6" r="1.9"/><circle cx="133.5" cy="611.0" r="1.9"/><circle cx="143.6" cy="609.4" r="1.9"/><circle cx="153.7" cy="607.8" r="1.9"/><circle cx="163.8" cy="606.2" r="1.9"/><circle cx="173.9" cy="604.6" r="1.9"/><circle cx="184.0" cy="603.0" r="1.9"/><circle cx="194.1" cy="601.4" r="1.9"/><circle cx="204.2" cy="599.8" r="1.9"/><circle cx="214.3" cy="598.2" r="1.9"/><circle cx="224.4" cy="596.6" r="1.9"/><circle cx="234.5" cy="595.0" r="1.9"/><circle cx="86.1" cy="629.4" r="1.9"/><circle cx="96.2" cy="627.8" r="1.9"/><circle cx="106.3" cy="626.2" r="1.9"/><circle cx="116.4" cy="624.6" r="1.9"/><circle cx="126.5" cy="623.0" r="1.9"/><circle cx="136.6" cy="621.4" r="1.9"/><circle cx="146.7" cy="619.8" r="1.9"/><circle cx="156.8" cy="618.2" r="1.9"/><circle cx="166.9" cy="616.6" r="1.9"/><circle cx="177.0" cy="615.0" r="1.9"/><circle cx="187.1" cy="613.4" r="1.9"/><circle cx="197.2" cy="611.8" r="1.9"/><circle cx="207.3" cy="610.2" r="1.9"/><circle cx="217.4" cy="608.6" r="1.9"/><circle cx="227.5" cy="607.0" r="1.9"/><circle cx="237.6" cy="605.4" r="1.9"/><circle cx="89.2" cy="639.8" r="1.9"/><circle cx="99.3" cy="638.2" r="1.9"/><circle cx="109.4" cy="636.6" r="1.9"/><circle cx="119.5" cy="635.0" r="1.9"/><circle cx="129.6" cy="633.4" r="1.9"/><circle cx="139.7" cy="631.8" r="1.9"/><circle cx="149.8" cy="630.2" r="1.9"/><circle cx="159.9" cy="628.6" r="1.9"/><circle cx="170.0" cy="627.0" r="1.9"/><circle cx="180.1" cy="625.4" r="1.9"/><circle cx="190.2" cy="623.8" r="1.9"/><circle cx="200.3" cy="622.2" r="1.9"/><circle cx="210.4" cy="620.6" r="1.9"/><circle cx="220.5" cy="619.0" r="1.9"/><circle cx="230.6" cy="617.4" r="1.9"/><circle cx="240.7" cy="615.8" r="1.9"/><circle cx="92.3" cy="650.2" r="1.9"/><circle cx="102.4" cy="648.6" r="1.9"/><circle cx="112.5" cy="647.0" r="1.9"/><circle cx="122.6" cy="645.4" r="1.9"/><circle cx="132.7" cy="643.8" r="1.9"/><circle cx="142.8" cy="642.2" r="1.9"/><circle cx="152.9" cy="640.6" r="1.9"/><circle cx="163.0" cy="639.0" r="1.9"/><circle cx="173.1" cy="637.4" r="1.9"/><circle cx="183.2" cy="635.8" r="1.9"/><circle cx="193.3" cy="634.2" r="1.9"/><circle cx="203.4" cy="632.6" r="1.9"/><circle cx="213.5" cy="631.0" r="1.9"/><circle cx="223.6" cy="629.4" r="1.9"/><circle cx="233.7" cy="627.8" r="1.9"/><circle cx="243.8" cy="626.2" r="1.9"/><circle cx="95.4" cy="660.6" r="1.9"/><circle cx="105.5" cy="659.0" r="1.9"/><circle cx="115.6" cy="657.4" r="1.9"/><circle cx="125.7" cy="655.8" r="1.9"/><circle cx="135.8" cy="654.2" r="1.9"/><circle cx="145.9" cy="652.6" r="1.9"/><circle cx="156.0" cy="651.0" r="1.9"/><circle cx="166.1" cy="649.4" r="1.9"/><circle cx="176.2" cy="647.8" r="1.9"/><circle cx="186.3" cy="646.2" r="1.9"/><circle cx="196.4" cy="644.6" r="1.9"/><circle cx="206.5" cy="643.0" r="1.9"/><circle cx="216.6" cy="641.4" r="1.9"/><circle cx="226.7" cy="639.8" r="1.9"/><circle cx="236.8" cy="638.2" r="1.9"/><circle cx="246.9" cy="636.6" r="1.9"/><circle cx="98.5" cy="671.0" r="1.9"/><circle cx="108.6" cy="669.4" r="1.9"/><circle cx="118.7" cy="667.8" r="1.9"/><circle cx="128.8" cy="666.2" r="1.9"/><circle cx="138.9" cy="664.6" r="1.9"/><circle cx="149.0" cy="663.0" r="1.9"/><circle cx="159.1" cy="661.4" r="1.9"/><circle cx="169.2" cy="659.8" r="1.9"/><circle cx="179.3" cy="658.2" r="1.9"/><circle cx="189.4" cy="656.6" r="1.9"/><circle cx="199.5" cy="655.0" r="1.9"/><circle cx="209.6" cy="653.4" r="1.9"/><circle cx="219.7" cy="651.8" r="1.9"/><circle cx="229.8" cy="650.2" r="1.9"/><circle cx="239.9" cy="648.6" r="1.9"/><circle cx="250.0" cy="647.0" r="1.9"/><circle cx="101.6" cy="681.4" r="1.9"/><circle cx="111.7" cy="679.8" r="1.9"/><circle cx="121.8" cy="678.2" r="1.9"/><circle cx="131.9" cy="676.6" r="1.9"/><circle cx="142.0" cy="675.0" r="1.9"/><circle cx="152.1" cy="673.4" r="1.9"/><circle cx="162.2" cy="671.8" r="1.9"/><circle cx="172.3" cy="670.2" r="1.9"/><circle cx="182.4" cy="668.6" r="1.9"/><circle cx="192.5" cy="667.0" r="1.9"/><circle cx="202.6" cy="665.4" r="1.9"/><circle cx="212.7" cy="663.8" r="1.9"/><circle cx="222.8" cy="662.2" r="1.9"/><circle cx="232.9" cy="660.6" r="1.9"/><circle cx="243.0" cy="659.0" r="1.9"/><circle cx="253.1" cy="657.4" r="1.9"/><circle cx="104.7" cy="691.8" r="1.9"/><circle cx="114.8" cy="690.2" r="1.9"/><circle cx="124.9" cy="688.6" r="1.9"/><circle cx="135.0" cy="687.0" r="1.9"/><circle cx="145.1" cy="685.4" r="1.9"/><circle cx="155.2" cy="683.8" r="1.9"/><circle cx="165.3" cy="682.2" r="1.9"/><circle cx="175.4" cy="680.6" r="1.9"/><circle cx="185.5" cy="679.0" r="1.9"/><circle cx="195.6" cy="677.4" r="1.9"/><circle cx="205.7" cy="675.8" r="1.9"/><circle cx="215.8" cy="674.2" r="1.9"/><circle cx="225.9" cy="672.6" r="1.9"/><circle cx="236.0" cy="671.0" r="1.9"/><circle cx="246.1" cy="669.4" r="1.9"/><circle cx="256.2" cy="667.8" r="1.9"/><circle cx="107.8" cy="702.2" r="1.9"/><circle cx="117.9" cy="700.6" r="1.9"/><circle cx="128.0" cy="699.0" r="1.9"/><circle cx="138.1" cy="697.4" r="1.9"/><circle cx="148.2" cy="695.8" r="1.9"/><circle cx="158.3" cy="694.2" r="1.9"/><circle cx="168.4" cy="692.6" r="1.9"/><circle cx="178.5" cy="691.0" r="1.9"/><circle cx="188.6" cy="689.4" r="1.9"/><circle cx="198.7" cy="687.8" r="1.9"/><circle cx="208.8" cy="686.2" r="1.9"/><circle cx="218.9" cy="684.6" r="1.9"/><circle cx="229.0" cy="683.0" r="1.9"/><circle cx="239.1" cy="681.4" r="1.9"/><circle cx="249.2" cy="679.8" r="1.9"/><circle cx="259.3" cy="678.2" r="1.9"/><circle cx="110.9" cy="712.6" r="1.9"/><circle cx="121.0" cy="711.0" r="1.9"/><circle cx="131.1" cy="709.4" r="1.9"/><circle cx="141.2" cy="707.8" r="1.9"/><circle cx="151.3" cy="706.2" r="1.9"/><circle cx="161.4" cy="704.6" r="1.9"/><circle cx="171.5" cy="703.0" r="1.9"/><circle cx="181.6" cy="701.4" r="1.9"/><circle cx="191.7" cy="699.8" r="1.9"/><circle cx="201.8" cy="698.2" r="1.9"/><circle cx="211.9" cy="696.6" r="1.9"/><circle cx="222.0" cy="695.0" r="1.9"/><circle cx="232.1" cy="693.4" r="1.9"/><circle cx="242.2" cy="691.8" r="1.9"/><circle cx="252.3" cy="690.2" r="1.9"/><circle cx="262.4" cy="688.6" r="1.9"/><circle cx="114.0" cy="723.0" r="1.9"/><circle cx="124.1" cy="721.4" r="1.9"/><circle cx="134.2" cy="719.8" r="1.9"/><circle cx="144.3" cy="718.2" r="1.9"/><circle cx="154.4" cy="716.6" r="1.9"/><circle cx="164.5" cy="715.0" r="1.9"/><circle cx="174.6" cy="713.4" r="1.9"/><circle cx="184.7" cy="711.8" r="1.9"/><circle cx="194.8" cy="710.2" r="1.9"/><circle cx="204.9" cy="708.6" r="1.9"/><circle cx="215.0" cy="707.0" r="1.9"/><circle cx="225.1" cy="705.4" r="1.9"/><circle cx="235.2" cy="703.8" r="1.9"/><circle cx="245.3" cy="702.2" r="1.9"/><circle cx="255.4" cy="700.6" r="1.9"/><circle cx="265.5" cy="699.0" r="1.9"/><circle cx="117.1" cy="733.4" r="1.9"/><circle cx="127.2" cy="731.8" r="1.9"/><circle cx="137.3" cy="730.2" r="1.9"/><circle cx="147.4" cy="728.6" r="1.9"/><circle cx="157.5" cy="727.0" r="1.9"/><circle cx="167.6" cy="725.4" r="1.9"/><circle cx="177.7" cy="723.8" r="1.9"/><circle cx="187.8" cy="722.2" r="1.9"/><circle cx="197.9" cy="720.6" r="1.9"/><circle cx="208.0" cy="719.0" r="1.9"/><circle cx="218.1" cy="717.4" r="1.9"/><circle cx="228.2" cy="715.8" r="1.9"/><circle cx="238.3" cy="714.2" r="1.9"/><circle cx="248.4" cy="712.6" r="1.9"/><circle cx="258.5" cy="711.0" r="1.9"/><circle cx="268.6" cy="709.4" r="1.9"/><circle cx="120.2" cy="743.8" r="1.9"/><circle cx="130.3" cy="742.2" r="1.9"/><circle cx="140.4" cy="740.6" r="1.9"/><circle cx="150.5" cy="739.0" r="1.9"/><circle cx="160.6" cy="737.4" r="1.9"/><circle cx="170.7" cy="735.8" r="1.9"/><circle cx="180.8" cy="734.2" r="1.9"/><circle cx="190.9" cy="732.6" r="1.9"/><circle cx="201.0" cy="731.0" r="1.9"/><circle cx="211.1" cy="729.4" r="1.9"/><circle cx="221.2" cy="727.8" r="1.9"/><circle cx="231.3" cy="726.2" r="1.9"/><circle cx="241.4" cy="724.6" r="1.9"/><circle cx="251.5" cy="723.0" r="1.9"/><circle cx="261.6" cy="721.4" r="1.9"/><circle cx="271.7" cy="719.8" r="1.9"/></g><g filter="url(#b2)"><path d="M135,655 C150,668 160,672 172,660" stroke="#8e84a8" stroke-width="5" fill="none" opacity=".6"/><path d="M120,680 L150,683" stroke="#7a7096" stroke-width="4" opacity=".6"/></g></g></g></svg><div class="abs" style="left:665px;top:233px;width:169px;height:222px;background:#fff;border:1px solid #b9b9b9;box-shadow:7px 7px 9px rgba(0,0,0,.55)"></div><div class="abs" style="left:670px;top:466px;width:5px;height:15px;background:#7c2218"></div><div class="t" style="left:680.0px;top:466px;font-size:17.6px;font-weight:700;color:#111;transform:scaleX(0.7332);">Marieloz Bonilla Moya</div><svg class="abs" style="left:0;top:0" width="1252" height="855" viewBox="0 0 1252 855"><defs><clipPath id="pp"><rect x="677" y="246" width="146" height="196"/></clipPath>
<filter id="pb1" x="-10%" y="-10%" width="120%" height="120%"><feGaussianBlur stdDeviation="1.3"/></filter>
<filter id="pb2" x="-10%" y="-10%" width="120%" height="120%"><feGaussianBlur stdDeviation="2.4"/></filter>
<filter id="pb3" x="-25%" y="-25%" width="150%" height="150%"><feGaussianBlur stdDeviation="4.5"/></filter>
<filter id="rock" x="0" y="0" width="100%" height="100%"><feTurbulence type="fractalNoise" baseFrequency="0.22" numOctaves="2" seed="8" result="n"/><feColorMatrix in="n" type="matrix" values="0 0 0 0 0.30  0 0 0 0 0.2  0 0 0 0 0.14  0 1.6 0 0 -0.88" result="d"/><feComposite in="d" in2="SourceGraphic" operator="in" result="dd"/><feMerge><feMergeNode in="SourceGraphic"/><feMergeNode in="dd"/></feMerge><feGaussianBlur stdDeviation="0.7"/></filter>
<filter id="cloud" x="0" y="0" width="100%" height="100%"><feTurbulence type="fractalNoise" baseFrequency="0.035" numOctaves="3" seed="4" result="n"/><feColorMatrix in="n" type="matrix" values="0 0 0 0 0.62  0 0 0 0 0.58  0 0 0 0 0.74  1.9 0 0 0 -0.72" result="d"/><feComposite in="d" in2="SourceGraphic" operator="in" result="dd"/><feMerge><feMergeNode in="SourceGraphic"/><feMergeNode in="dd"/></feMerge></filter>
<linearGradient id="faceg" x1="0.1" y1="0.6" x2="0.95" y2="0.25"><stop offset="0" stop-color="#9c5230"/><stop offset=".45" stop-color="#d68c5e"/><stop offset="1" stop-color="#f2bc94"/></linearGradient>
</defs><g clip-path="url(#pp)"><g filter="url(#cloud)"><rect x="670" y="240" width="160" height="130" fill="#f3eff8"/></g><g filter="url(#pb3)"><ellipse cx="686" cy="322" rx="9" ry="14" fill="#8e88b4" opacity=".8"/><ellipse cx="700" cy="290" rx="16" ry="10" fill="#d4cee2" opacity=".7"/><ellipse cx="800" cy="262" rx="30" ry="14" fill="#fbfaff"/><ellipse cx="815" cy="318" rx="10" ry="18" fill="#d9d2e4" opacity=".8"/></g><g filter="url(#rock)"><polygon points="677,357 700,352 720,350 745,352 780,352 800,349 823,345 823,442 677,442" fill="#2a1d18"/></g><g filter="url(#pb1)"><polygon points="677,384 700,381 725,386 745,395 756,414 772,424 786,426 790,442 677,442" fill="#13152a"/></g><g filter="url(#pb2)"><path d="M764,276 C745,277 728,288 718,303 C708,318 710,334 716,346 C718,362 726,378 742,388 L758,380 L806,350 C818,340 822,328 817,314 C810,292 790,277 764,276 Z" fill="#26151a"/></g><g filter="url(#pb2)"><path d="M748,336 C760,322 792,318 808,328" stroke="#5e2a1c" stroke-width="6" fill="none" opacity=".75"/></g><g filter="url(#pb1)"><polygon points="733,300 737,284 744,275 749,280 742,302" fill="#34348e"/><polygon points="746,275 750,269 757,270 755,279" fill="#f4f4fa"/></g><g filter="url(#pb1)"><path d="M754,336 C766,326 792,326 806,334 C814,344 814,362 809,380 C803,400 790,416 772,420 C758,418 748,404 744,388 C741,370 744,348 754,336 Z" fill="url(#faceg)"/><ellipse cx="795" cy="342" rx="10" ry="6" fill="#fad0ac" opacity=".8"/><path d="M757,360 q7,-3 14,2" stroke="#2e140e" stroke-width="2.8" fill="none"/><path d="M792,364 q7,-3 13,0" stroke="#2e140e" stroke-width="2.8" fill="none"/><path d="M754,354 q9,-5 19,0" stroke="#5a2a18" stroke-width="1.6" fill="none"/><path d="M789,357 q8,-4 17,-1" stroke="#5a2a18" stroke-width="1.6" fill="none"/><path d="M783,368 q3,10 -2,15 q4,3 8,0" stroke="#8c4426" stroke-width="2" fill="none"/><path d="M762,394 q12,8 26,0" stroke="#8e3428" stroke-width="2.6" fill="none"/><path d="M746,372 C748,392 756,410 770,419 C762,404 756,386 756,366 Z" fill="#7a3a20" opacity=".55"/></g></g></svg><div class="t" style="left:871.8px;top:200px;font-size:110.5px;color:#269b84;transform:scaleX(0.8647);-webkit-text-stroke:2px #269b84;">U</div><div class="t" style="left:944.6px;top:215px;font-size:16.6px;color:#1c1c1c;letter-spacing:3.552px;word-spacing:28.414px;">n destino</div><div class="t" style="left:944.6px;top:236px;font-size:16.6px;color:#1c1c1c;letter-spacing:3.574px;word-spacing:0.000px;">ecoturístico</div><div class="t" style="left:944.6px;top:258px;font-size:16.6px;color:#1c1c1c;letter-spacing:0.803px;word-spacing:10.435px;">se caracteriza</div><div class="t" style="left:944.6px;top:279px;font-size:16.6px;color:#1c1c1c;letter-spacing:2.103px;word-spacing:10.517px;">no solo por</div><div class="t" style="left:870.8px;top:301px;font-size:16.6px;color:#1c1c1c;letter-spacing:0.776px;word-spacing:8.152px;">la responsabilidad con</div><div class="t" style="left:870.8px;top:323px;font-size:16.6px;color:#1c1c1c;letter-spacing:0.000px;word-spacing:2.851px;">que se maneje el recurso</div><div class="t" style="left:870.8px;top:344px;font-size:16.6px;color:#1c1c1c;letter-spacing:0.314px;word-spacing:2.516px;">natural, sino también por</div><div class="t" style="left:870.8px;top:366px;font-size:16.6px;color:#1c1c1c;letter-spacing:0.369px;word-spacing:2.121px;">cómo se trate el impacto</div><div class="t" style="left:870.8px;top:387px;font-size:16.6px;color:#1c1c1c;letter-spacing:1.019px;word-spacing:7.130px;">y participación de las</div><div class="t" style="left:870.8px;top:409px;font-size:16.6px;color:#1c1c1c;letter-spacing:0.000px;word-spacing:0.662px;">comunidades locales.</div><div class="t" style="left:870.8px;top:436px;font-size:16.6px;color:#1c1c1c;letter-spacing:0.000px;word-spacing:1.654px;">El turismo vivencial puede</div><div class="t" style="left:870.8px;top:458px;font-size:16.6px;color:#1c1c1c;letter-spacing:1.295px;word-spacing:12.304px;">significar una buena</div><div class="t" style="left:870.8px;top:479px;font-size:16.6px;color:#1c1c1c;letter-spacing:0.862px;word-spacing:17.241px;">práctica, comprendida</div><div class="t" style="left:870.8px;top:501px;font-size:16.6px;color:#1c1c1c;letter-spacing:1.885px;word-spacing:15.079px;">como una vivencia</div><div class="t" style="left:648.6px;top:522px;font-size:16.6px;color:#1c1c1c;letter-spacing:0.306px;word-spacing:2.703px;">auténtica sin ingredientes artificiales, que de manera</div><div class="t" style="left:648.6px;top:544px;font-size:16.6px;color:#1c1c1c;letter-spacing:0.399px;word-spacing:2.262px;">controlada brinda respeto a la cultura y dota de una</div><div class="t" style="left:648.6px;top:566px;font-size:16.6px;color:#1c1c1c;letter-spacing:0.584px;word-spacing:6.712px;">responsabilidad socioeconómica al turismo, como</div><div class="t" style="left:648.6px;top:587px;font-size:16.6px;color:#1c1c1c;letter-spacing:0.276px;word-spacing:2.394px;">generador de fortalecimiento organizativo, al seno de</div><div class="t" style="left:648.6px;top:609px;font-size:16.6px;color:#1c1c1c;letter-spacing:0.117px;word-spacing:1.010px;">una actividad económica que implique autonomía local.</div><div class="t" style="left:648.6px;top:636px;font-size:16.6px;color:#1c1c1c;letter-spacing:0.000px;word-spacing:0.827px;">Si bien es cierto, no existen estadísticas ni investigación</div><div class="t" style="left:648.6px;top:658px;font-size:16.6px;color:#1c1c1c;letter-spacing:0.228px;word-spacing:1.569px;">científica sobre el impacto del turismo vivencial en las</div><div class="t" style="left:648.6px;top:679px;font-size:16.6px;color:#1c1c1c;letter-spacing:0.215px;word-spacing:1.860px;">comunidades costarricenses, este análisis se atreve a</div><div class="t" style="left:648.6px;top:701px;font-size:16.6px;color:#1c1c1c;letter-spacing:0.364px;word-spacing:3.710px;">describir de manera empírica resultados cualitativos</div><div class="t" style="left:648.6px;top:722px;font-size:16.6px;color:#1c1c1c;letter-spacing:0.000px;word-spacing:1.170px;">de dos comunidades organizadas de Costa Rica, en los</div><div class="t" style="left:648.6px;top:744px;font-size:16.6px;color:#1c1c1c;letter-spacing:0.264px;word-spacing:1.923px;">últimos doce años. Se describen aspectos positivos y</div><div class="t" style="left:648.6px;top:766px;font-size:16.6px;color:#1c1c1c;letter-spacing:0.000px;word-spacing:0.416px;">posibles riesgos, situación considerada como parte de la</div><div class="t" style="left:648.6px;top:787px;font-size:16.6px;color:#1c1c1c;letter-spacing:0.000px;word-spacing:0.779px;">responsabilidad de los actores implicados.</div><div class="t" style="left:648.6px;top:837px;font-size:18.5px;font-weight:700;color:#111;transform:scaleX(0.9037);">Turismo vivencial</div></div>
</div>

<!--OVERLAYS-->
<div id="edgeL"></div><div class="abs" style="left:0;top:93px;width:1px;height:7px;background:#eeb36a"></div>
<div id="edgeR"></div>
</div>
</body>
</html>
